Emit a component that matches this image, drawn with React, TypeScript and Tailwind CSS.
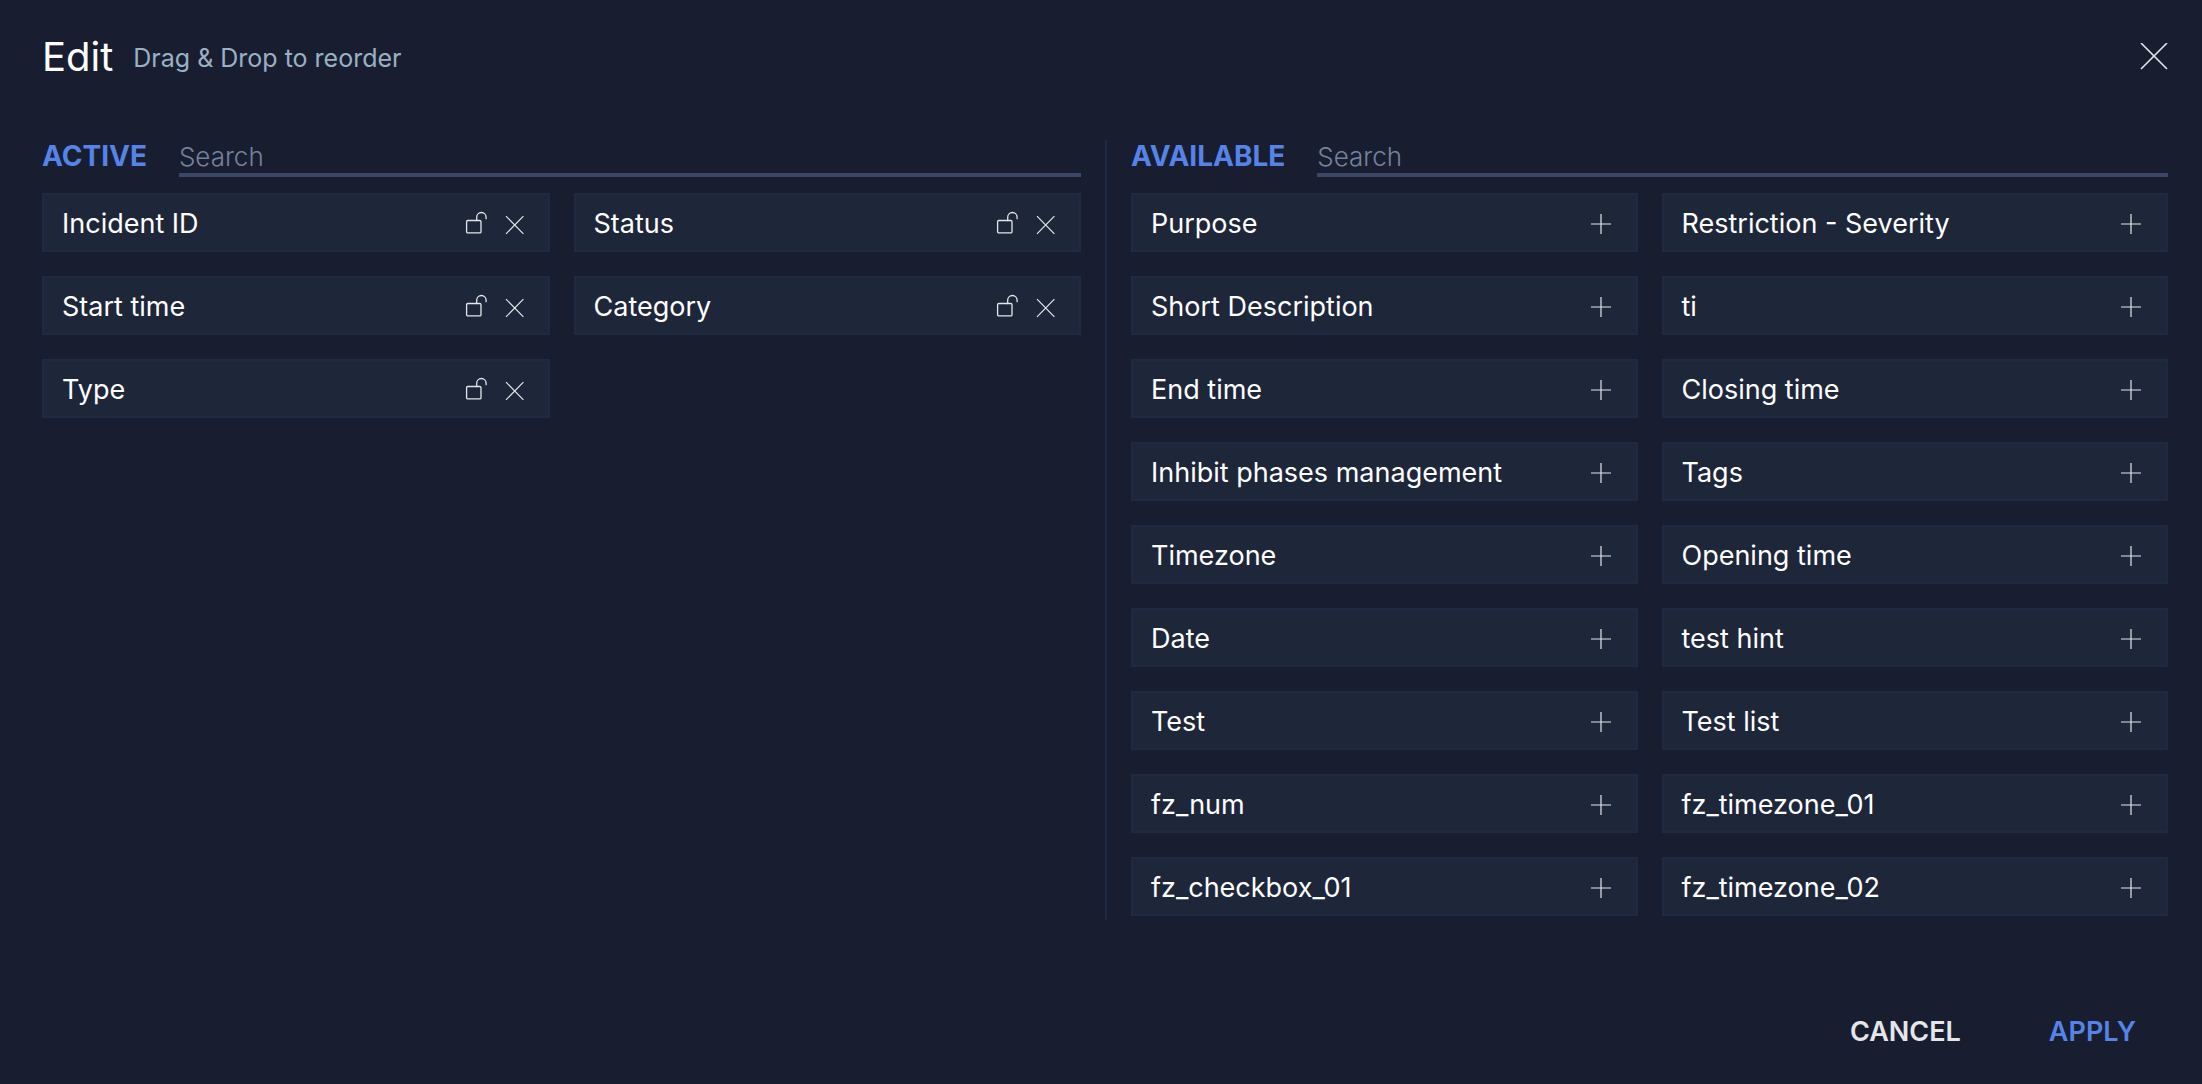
import React, { useState } from "react";

const activeFields = ["Incident ID", "Status", "Start time", "Category", "Type"];

const availableFields = [
  "Purpose",
  "Restriction - Severity",
  "Short Description",
  "ti",
  "End time",
  "Closing time",
  "Inhibit phases management",
  "Tags",
  "Timezone",
  "Opening time",
  "Date",
  "test hint",
  "Test",
  "Test list",
  "fz_num",
  "fz_timezone_01",
  "fz_checkbox_01",
  "fz_timezone_02",
];

function UnlockIcon() {
  return (
    <svg viewBox="0 0 25 25" className="size-[25px]" fill="none" stroke="currentColor" strokeWidth="1.3" strokeLinecap="round" aria-hidden="true">
      <rect x="2.6" y="10.5" width="14.4" height="12.4" rx="1.2" />
      <path d="M12.7 10.5V7.2a4.7 4.7 0 0 1 9.4 0v1.5" />
    </svg>
  );
}

function RemoveIcon() {
  return (
    <svg viewBox="0 0 25 25" className="size-[25px]" fill="none" stroke="currentColor" strokeWidth="1.2" aria-hidden="true">
      <path d="M5 6.2 22.4 23.8M22.4 6.2 5 23.8" />
    </svg>
  );
}

function AddIcon() {
  return (
    <svg viewBox="0 0 25 25" className="size-[25px]" fill="none" stroke="currentColor" strokeWidth="1.2" aria-hidden="true">
      <path d="M12 4v20M2 14h20" />
    </svg>
  );
}

function CloseIcon() {
  return (
    <svg viewBox="0 0 28 28" className="size-7" fill="none" stroke="currentColor" strokeWidth="1.6" aria-hidden="true">
      <path d="M1 0 27 26M27 0 1 26" />
    </svg>
  );
}

function FieldCard({ name, children }: { name: string; children: React.ReactNode }) {
  return (
    <li className="flex h-[59px] cursor-grab items-center justify-between border-2 border-[#1f2a42] bg-[#1e263a] pr-[22px] pl-[18px]">
      <span className="pt-1 text-[27px] whitespace-nowrap text-white">{name}</span>
      <span className="flex gap-3 text-[#e4e7ea]">{children}</span>
    </li>
  );
}

function FieldColumn({
  id,
  title,
  className,
  fields,
  renderActions,
}: {
  id: string;
  title: string;
  className: string;
  fields: string[];
  renderActions: (name: string) => React.ReactNode;
}) {
  const [query, setQuery] = useState("");
  const shown = fields.filter((f) => f.toLowerCase().includes(query.toLowerCase()));
  return (
    <section className={className} aria-labelledby={id}>
      <div className="mb-4 flex gap-8">
        <h2 id={id} className="text-[28px] leading-[33px] font-bold text-[#5683e8]">
          {title}
        </h2>
        <input
          type="text"
          aria-label={`Search ${title.toLowerCase()} fields`}
          placeholder="Search"
          value={query}
          onChange={(e) => setQuery(e.target.value)}
          className="h-[37px] min-w-0 flex-1 border-b-4 border-[#3a4866] bg-transparent text-[26px] font-light text-white outline-none placeholder:text-[#75829d]"
        />
      </div>
      <ul className="grid grid-cols-2 gap-6">
        {shown.map((name) => (
          <FieldCard key={name} name={name}>
            {renderActions(name)}
          </FieldCard>
        ))}
      </ul>
    </section>
  );
}

export default function App() {
  const [active, setActive] = useState(activeFields);
  const [available, setAvailable] = useState(availableFields);

  const remove = (name: string) => {
    setActive(active.filter((f) => f !== name));
    setAvailable([...available, name]);
  };
  const add = (name: string) => {
    setAvailable(available.filter((f) => f !== name));
    setActive([...active, name]);
  };

  return (
    <div className="flex min-h-screen flex-col bg-[#181e2f] pt-9 pr-[34px] pb-6 pl-[42px] font-['Inter',sans-serif]">
      <header className="mb-[62px] flex h-[42px] items-center gap-5">
        <h1 className="text-[40px] text-white">Edit</h1>
        <p className="pt-1 text-[25px] text-[#9bb0c4]">Drag &amp; Drop to reorder</p>
        <button type="button" aria-label="Close" className="ml-auto text-[#e4e7ea]">
          <CloseIcon />
        </button>
      </header>

      <main className="grid grid-cols-2">
        <FieldColumn
          id="active-title"
          title="ACTIVE"
          className="pr-6"
          fields={active}
          renderActions={(name) => (
            <>
              <button type="button" aria-label={`Lock ${name}`}>
                <UnlockIcon />
              </button>
              <button type="button" aria-label={`Remove ${name}`} onClick={() => remove(name)}>
                <RemoveIcon />
              </button>
            </>
          )}
        />
        <FieldColumn
          id="available-title"
          title="AVAILABLE"
          className="border-l-2 border-[#1f2a42] pb-1 pl-6"
          fields={available}
          renderActions={(name) => (
            <button type="button" aria-label={`Add ${name}`} onClick={() => add(name)}>
              <AddIcon />
            </button>
          )}
        />
      </main>

      <footer className="mt-auto flex justify-end gap-6 text-[27px] font-semibold">
        <button type="button" className="h-14 px-8 text-[#e4e7ea]">
          CANCEL
        </button>
        <button type="button" className="h-14 px-8 text-[#5683e8]">
          APPLY
        </button>
      </footer>
    </div>
  );
}
